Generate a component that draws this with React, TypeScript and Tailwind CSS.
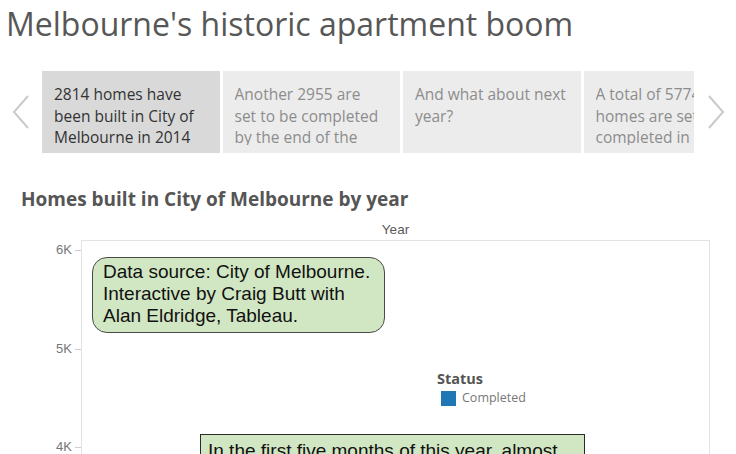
const stories = [
  { lines: ["2814 homes have", "been built in City of", "Melbourne in 2014"], active: true },
  { lines: ["Another 2955 are", "set to be completed", "by the end of the", "year"], active: false },
  { lines: ["And what about next", "year?"], active: false },
  { lines: ["A total of 5774", "homes are set to be", "completed in 2016"], active: false },
];

const yTicks = [
  { label: "6K", top: 10 },
  { label: "5K", top: 109 },
  { label: "4K", top: 207 },
];

const Chevron = ({ dir }: { dir: "left" | "right" }) => (
  <svg width="20" height="36" viewBox="0 0 20 36" fill="none">
    <path
      d={dir === "left" ? "M17 2 L3 18 L17 34" : "M3 2 L17 18 L3 34"}
      stroke="#cacaca"
      strokeWidth="2"
    />
  </svg>
);

const App = () => {
  return (
    <div className="w-[736px] h-[454px] overflow-hidden bg-white font-['Open_Sans',sans-serif]">
      {/* Title */}
      <div className="h-[71px] pl-[6px] pt-[4px]">
        <h1 className="text-[32px] leading-[40px] text-[#575757] font-normal whitespace-nowrap">
          Melbourne's historic apartment boom
        </h1>
      </div>

      {/* Story points */}
      <div className="flex h-[82px]">
        <div className="w-[42px] flex items-center justify-center pr-[1px]">
          <Chevron dir="left" />
        </div>
        <div className="w-[652px] flex gap-[3px] overflow-hidden">
          {stories.map((s) => (
            <div
              key={s.lines[0]}
              className={`flex-none w-[177.5px] h-full pl-[12px] pr-[8px] pt-[13px] ${
                s.active ? "bg-[#d9d9d9] text-[#333333]" : "bg-[#ececec] text-[#8c8c8c]"
              }`}
            >
              <div className="h-[61px] overflow-hidden text-[15.5px] leading-[21.5px] whitespace-nowrap">
                {s.lines.map((l) => (
                  <div key={l}>{l}</div>
                ))}
              </div>
            </div>
          ))}
        </div>
        <div className="flex-1 flex items-center justify-center pl-[1px]">
          <Chevron dir="right" />
        </div>
      </div>

      {/* Chart */}
      <div className="pt-[34px]">
        <h2 className="pl-[21px] text-[19px] leading-[25px] font-bold text-[#555555] whitespace-nowrap">
          Homes built in City of Melbourne by year
        </h2>
        <div className="mt-[10px] pl-[81px] w-[710px] text-center text-[13.5px] leading-[15px] text-[#5a5a5a] font-['Liberation_Sans',Arial,sans-serif]">
          Year
        </div>
        <div className="mt-[3px] flex">
          <div className="relative w-[81px] h-[240px] font-['Liberation_Sans',Arial,sans-serif]">
            {yTicks.map((t) => (
              <div
                key={t.label}
                className="absolute right-0 flex items-center gap-[3px] -translate-y-1/2"
                style={{ top: t.top }}
              >
                <span className="text-[13px] leading-[14px] text-[#777777]">{t.label}</span>
                <span className="w-[6px] h-px bg-[#cfcfcf]" />
              </div>
            ))}
          </div>
          <div className="relative w-[629px] h-[240px] border-l border-t border-r border-[#e2e2e2]">
            {/* annotation: source */}
            <div className="absolute left-[10px] top-[16px] w-[293px] h-[76px] rounded-[15px] border-[1.5px] border-[#4b4b45] bg-[#d1e7c3] pl-[10px] pt-[3px] text-[19px] leading-[22px] text-[#111111] whitespace-nowrap font-['Liberation_Sans',Arial,sans-serif]">
              Data source: City of Melbourne.
              <br />
              Interactive by Craig Butt with
              <br />
              Alan Eldridge, Tableau.
            </div>

            {/* legend */}
            <div className="absolute left-[355px] top-[128px]">
              <div className="text-[14.5px] leading-[19px] font-bold text-[#555555]">Status</div>
              <div className="flex items-center gap-[6px] pl-[4px] mt-[2px]">
                <span className="w-[15px] h-[15px] bg-[#1f77b4]" />
                <span className="text-[12.5px] leading-[16px] text-[#777777]">Completed</span>
              </div>
            </div>

            {/* annotation: first five months */}
            <div className="absolute left-[118px] top-[193px] w-[385px] h-[80px] border border-[#2a2a2a] bg-[#d1e7c3] pl-[7px] pt-[5px] text-[19px] leading-[22px] text-[#111111] whitespace-nowrap font-['Liberation_Sans',Arial,sans-serif]">
              In the first five months of this year, almost
              <br />
              2000 homes have been completed.
            </div>
          </div>
        </div>
      </div>
    </div>
  );
};

export default App;
